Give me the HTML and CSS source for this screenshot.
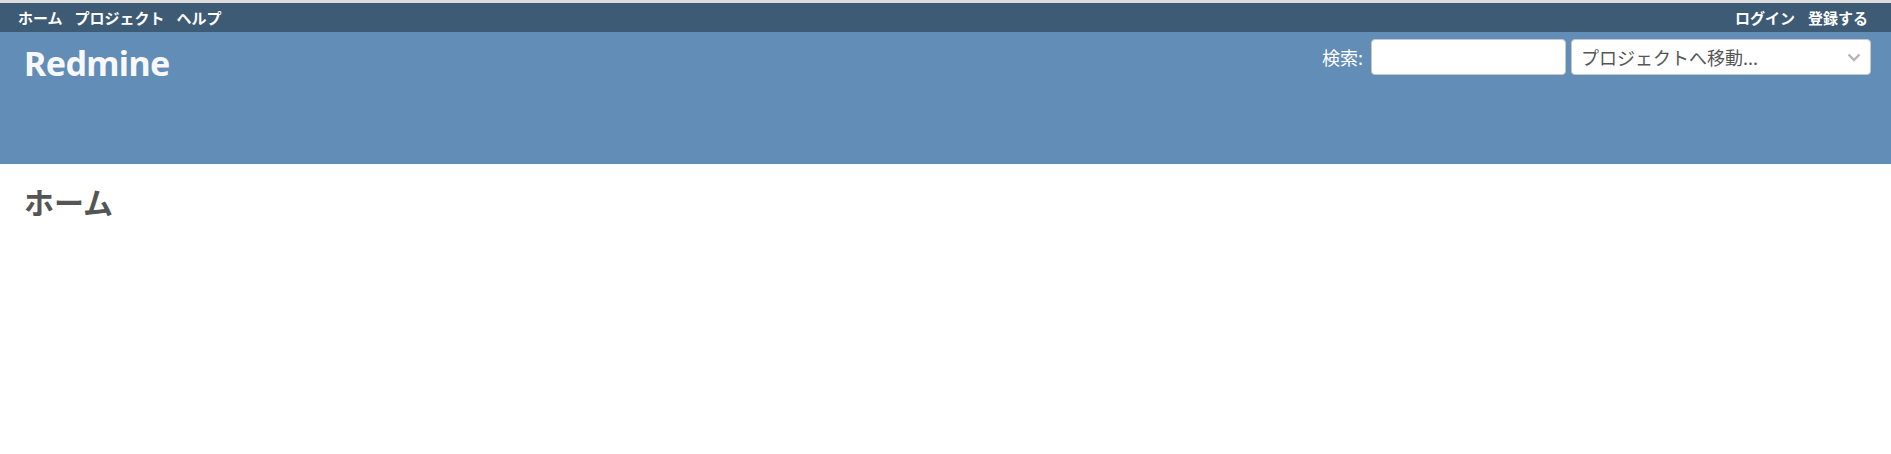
FILE: index.html
```html
<!DOCTYPE html>
<html lang="ja">
<head>
<meta charset="utf-8">
<title>Redmine</title>
<link rel="stylesheet" href="styles.css">
</head>
<body>
<div class="top-menu">
  <ul class="menu">
    <li><a href="#">ホーム</a></li>
    <li><a href="#">プロジェクト</a></li>
    <li><a href="#">ヘルプ</a></li>
  </ul>
  <ul class="menu account">
    <li><a href="#">ログイン</a></li>
    <li><a href="#">登録する</a></li>
  </ul>
</div>
<div class="header">
  <h1 class="logo">Redmine</h1>
  <form class="quick-search">
    <label class="search-label">検索:</label>
    <input class="search-input" type="text">
    <div class="jump">
      <span class="jump-text">プロジェクトへ移動...</span>
      <svg class="chevron" width="14" height="9" viewBox="0 0 14 9"><path d="M1.5 1.5 L7 7 L12.5 1.5" fill="none" stroke="#b5b5b5" stroke-width="2.4"/></svg>
    </div>
  </form>
</div>
<div class="content">
  <h2 class="page-title">ホーム</h2>
</div>
</body>
</html>
```
FILE: styles.css
```css
html, body {
  margin: 0;
  padding: 0;
  background: #fff;
}
body {
  font-family: "Noto Sans", "Noto Sans CJK JP", sans-serif;
}
.top-menu {
  border-top: 3px solid #dcdcdc;
  background: #3e5b76;
  height: 29px;
  display: flex;
  justify-content: space-between;
  align-items: center;
  padding: 0 23px 0 18px;
}
.menu {
  list-style: none;
  margin: 0;
  padding: 0;
  display: flex;
  gap: 12px;
}
.account {
  gap: 13px;
}
.menu a {
  color: #fff;
  text-decoration: none;
  font-family: "Noto Sans CJK JP", sans-serif;
  font-weight: 700;
  font-size: 15px;
  line-height: 18px;
  display: block;
}
.header {
  background: #628db6;
  height: 132px;
  display: flex;
  justify-content: space-between;
  align-items: flex-start;
  padding: 0 20px 0 24px;
}
.logo {
  margin: 0;
  padding-top: 9px;
  color: #f8f8f8;
  font-family: "Noto Sans", sans-serif;
  font-weight: 700;
  font-size: 34px;
  line-height: 44px;
  letter-spacing: -0.6px;
}
.quick-search {
  display: flex;
  align-items: center;
  margin-top: 7px;
}
.search-label {
  color: #fff;
  font-family: "Noto Sans CJK JP", sans-serif;
  font-size: 18px;
  margin-right: 8px;
}
.search-input {
  box-sizing: border-box;
  width: 195px;
  height: 36px;
  border: 1px solid #c8c8c8;
  border-radius: 4px;
  background: #fff;
  margin: 0 5px 0 0;
  padding: 0;
}
.jump {
  box-sizing: border-box;
  width: 300px;
  height: 36px;
  border: 1px solid #c8c8c8;
  border-radius: 4px;
  background: #fff;
  display: flex;
  align-items: center;
  justify-content: space-between;
  padding: 0 9px 0 9px;
}
.jump-text {
  color: #555;
  font-family: "Noto Sans CJK JP", sans-serif;
  font-size: 18px;
  line-height: 22px;
}
.chevron {
  display: block;
}
.content {
  padding: 16px 24px;
}
.page-title {
  margin: 0;
  color: #555;
  font-family: "Noto Sans CJK JP", sans-serif;
  font-weight: 700;
  font-size: 30px;
  line-height: 42px;
}
```
